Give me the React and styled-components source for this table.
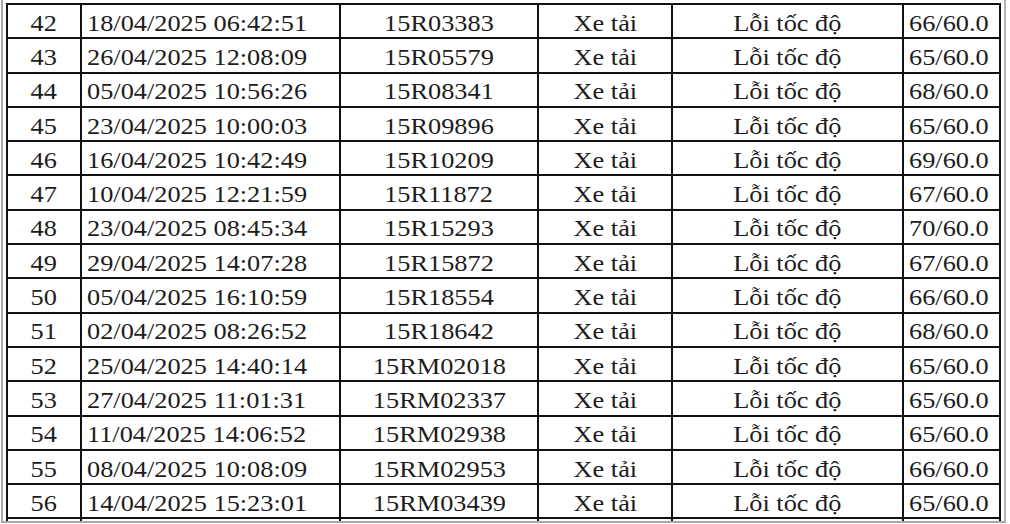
import React from 'react';
import styled, { createGlobalStyle } from 'styled-components';

const GlobalStyle = createGlobalStyle`
  html, body {
    margin: 0;
    padding: 0;
    background: #ffffff;
  }
  body {
    width: 1010px;
    height: 524px;
    overflow: hidden;
  }
`;

const Frame = styled.div`
  width: fit-content;
  height: 518px;
  margin-left: 1px;
  padding: 3px 3px 0 3px;
  border-left: 2px solid #a9a9a9;
  border-right: 2px solid #b4b4b4;
  border-bottom: 2px solid #a9a9a9;
  overflow: hidden;
`;

const Sheet = styled.div`
  display: grid;
  grid-template-columns: 74px 259px 198px 134px 231px 97px;
  grid-auto-rows: 34.3px;
  border-top: 2px solid #111;
  border-left: 2px solid #111;
`;

const Cell = styled.div`
  box-sizing: border-box;
  display: flex;
  align-items: center;
  justify-content: ${(p) => (p.$left ? 'flex-start' : 'center')};
  padding: 3px 0 0 ${(p) => (p.$left ? '5px' : '0')};
  border-right: 2px solid #111;
  border-bottom: 2px solid #111;
  font-family: 'Liberation Serif', 'Times New Roman', serif;
  font-size: 23.5px;
  line-height: 30px;
  color: #1c1c1c;
  white-space: nowrap;
  overflow: hidden;
`;

const Text = styled.span`
  display: inline-block;
  transform: scaleX(1.12);
  transform-origin: ${(p) => (p.$left ? 'left center' : 'center')};
`;

const rows = [
  ['42', '18/04/2025 06:42:51', '15R03383', '66'],
  ['43', '26/04/2025 12:08:09', '15R05579', '65'],
  ['44', '05/04/2025 10:56:26', '15R08341', '68'],
  ['45', '23/04/2025 10:00:03', '15R09896', '65'],
  ['46', '16/04/2025 10:42:49', '15R10209', '69'],
  ['47', '10/04/2025 12:21:59', '15R11872', '67'],
  ['48', '23/04/2025 08:45:34', '15R15293', '70'],
  ['49', '29/04/2025 14:07:28', '15R15872', '67'],
  ['50', '05/04/2025 16:10:59', '15R18554', '66'],
  ['51', '02/04/2025 08:26:52', '15R18642', '68'],
  ['52', '25/04/2025 14:40:14', '15RM02018', '65'],
  ['53', '27/04/2025 11:01:31', '15RM02337', '65'],
  ['54', '11/04/2025 14:06:52', '15RM02938', '65'],
  ['55', '08/04/2025 10:08:09', '15RM02953', '66'],
  ['56', '14/04/2025 15:23:01', '15RM03439', '65'],
];

const App = () => (
  <>
    <GlobalStyle />
    <Frame>
      <Sheet>
        {rows.map(([no, time, plate, speed]) => (
          <React.Fragment key={no}>
            <Cell><Text>{no}</Text></Cell>
            <Cell $left><Text $left>{time}</Text></Cell>
            <Cell><Text>{plate}</Text></Cell>
            <Cell><Text>Xe tải</Text></Cell>
            <Cell><Text>Lỗi tốc độ</Text></Cell>
            <Cell $left><Text $left>{`${speed}/60.0`}</Text></Cell>
          </React.Fragment>
        ))}
        {/* the next row peeks out under the cut edge */}
        {Array.from({ length: 6 }, (_, i) => <Cell key={`tail-${i}`} />)}
      </Sheet>
    </Frame>
  </>
);

export default App;
